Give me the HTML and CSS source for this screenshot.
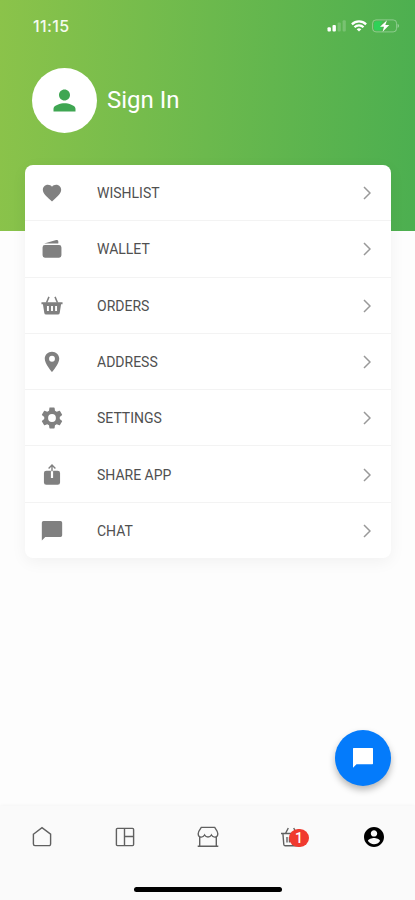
FILE: index.html
```html
<!DOCTYPE html>
<html lang="en">
<head>
    <meta charset="UTF-8">
    <meta name="viewport" content="width=device-width, initial-scale=1.0">
    <title>Account</title>
    <link rel="stylesheet" href="styles.css">
</head>
<body>
    <header class="header">
        <div class="status-bar">
            <span class="time">11:15</span>
            <div class="status-icons">
                <svg class="signal" width="20" height="12" viewBox="0 0 20 12" fill="#fff">
                    <rect x="0.5" y="7.3" width="3.4" height="4.3" rx="1"/>
                    <rect x="5.5" y="5" width="3.4" height="6.6" rx="1"/>
                    <rect x="10.6" y="2.6" width="3.2" height="9" rx="1" opacity="0.2"/>
                    <rect x="15.6" y="0.2" width="3.2" height="11.4" rx="1" opacity="0.2"/>
                </svg>
                <svg class="wifi" width="16" height="12" viewBox="0 0 16 12" fill="none" stroke="#fff" stroke-width="2.3">
                    <path d="M0.9 4.3a10.2 10.2 0 0 1 14.2 0"/>
                    <path d="M3.5 7.2a6.4 6.4 0 0 1 9 0"/>
                    <path d="M5.7 9.2a3.5 3.5 0 0 1 4.6 0L8 11.6z" fill="#fff" stroke="none"/>
                </svg>
                <svg class="battery" width="28" height="14" viewBox="0 0 28 14">
                    <rect x="0.6" y="0.9" width="24" height="12" rx="3.4" fill="none" stroke="#fff" stroke-opacity="0.35"/>
                    <path d="M4 2.3h6.6L7.8 7.6h2.4L9 11.5H4a2 2 0 0 1-2-2V4.3a2 2 0 0 1 2-2z" fill="#30d158"/>
                    <path d="M15 1.2L8 7.7h4l-1.4 5 6.7-6.6h-4z" fill="#fff"/>
                    <path d="M25.6 4.8c2 .8 2 3.4 0 4.2z" fill="#fff" opacity="0.4"/>
                </svg>
            </div>
        </div>
        <div class="profile">
            <div class="avatar">
                <svg width="33" height="33" viewBox="0 0 24 24" fill="#3fa652">
                    <path d="M12 12c2.21 0 4-1.79 4-4s-1.79-4-4-4-4 1.79-4 4 1.79 4 4 4zm0 2c-2.67 0-8 1.34-8 4v2h16v-2c0-2.66-5.33-4-8-4z"/>
                </svg>
            </div>
            <span class="sign-in">Sign In</span>
        </div>
    </header>

    <main class="content">
        <ul class="menu">
            <li class="menu-item">
                <svg class="icon" viewBox="0 0 24 24"><path d="M12 21.35l-1.45-1.32C5.4 15.36 2 12.28 2 8.5 2 5.42 4.42 3 7.5 3c1.74 0 3.41.81 4.5 2.09C13.09 3.81 14.76 3 16.5 3 19.58 3 22 5.42 22 8.5c0 3.78-3.4 6.86-8.55 11.54L12 21.35z"/></svg>
                <span class="label">WISHLIST</span>
                <svg class="chevron" viewBox="0 0 8 14"><path d="M1 1l6 6-6 6"/></svg>
            </li>
            <li class="menu-item">
                <svg class="icon" viewBox="0 0 24 24"><path d="M4.300 7.700h15.400A2.600 2.600 0 0 1 22.300 10.300v8.600a2.600 2.600 0 0 1-2.600 2.600H4.300A2.600 2.600 0 0 1 1.700 18.900V10.300A2.600 2.600 0 0 1 4.300 7.700zM3.400 6L16.600 2.300a1.800 1.800 0 0 1 2.300 1.800V6z"/></svg>
                <span class="label">WALLET</span>
                <svg class="chevron" viewBox="0 0 8 14"><path d="M1 1l6 6-6 6"/></svg>
            </li>
            <li class="menu-item">
                <svg class="icon" viewBox="0 0 24 24">
                    <path d="M8.700 2L6 8.500M15.300 2L18 8.500" fill="none" stroke="#808080" stroke-width="1.700"/>
                    <path fill-rule="evenodd" d="M0.500 7.800h23v2.400h-1.600l-1.500 9.400a2 2 0 0 1-2 1.800H5.600a2 2 0 0 1-2-1.800L2.100 10.200H0.500zM6.500 12v5.500h2.100v-5.500zM10.950 12v5.500h2.100v-5.500zM15.400 12v5.500H17.500v-5.500z"/>
                </svg>
                <span class="label">ORDERS</span>
                <svg class="chevron" viewBox="0 0 8 14"><path d="M1 1l6 6-6 6"/></svg>
            </li>
            <li class="menu-item">
                <svg class="icon" viewBox="0 0 24 24"><path fill-rule="evenodd" d="M12 0.900c-4.400 0-7.900 3.300-7.900 7.600 0 5.600 7.900 14.500 7.900 14.500s7.900-8.900 7.900-14.500c0-4.300-3.500-7.600-7.900-7.600zm0 10.800a3.200 3.200 0 1 1 0-6.400 3.200 3.200 0 0 1 0 6.400z"/></svg>
                <span class="label">ADDRESS</span>
                <svg class="chevron" viewBox="0 0 8 14"><path d="M1 1l6 6-6 6"/></svg>
            </li>
            <li class="menu-item">
                <svg class="icon icon-large" viewBox="0 0 24 24"><path d="M19.140 12.940c.04-.3.060-.61.060-.94 0-.32-.02-.64-.07-.94l2.030-1.580a.49.49 0 0 0 .12-.61l-1.920-3.320a.488.488 0 0 0-.59-.22l-2.390.96c-.5-.38-1.030-.7-1.620-.94l-.36-2.540a.484.484 0 0 0-.48-.41h-3.840c-.24 0-.43.17-.47.41l-.36 2.540c-.59.24-1.130.57-1.620.94l-2.390-.96a.488.488 0 0 0-.59.22L2.740 8.870a.49.49 0 0 0 .12.610l2.030 1.580c-.05.3-.09.630-.09.940s.02.640.07.940l-2.030 1.580a.49.49 0 0 0-.12.610l1.920 3.320c.12.220.37.290.59.220l2.390-.96c.5.380 1.030.7 1.620.94l.36 2.540c.05.240.24.410.48.410h3.840c.24 0 .44-.17.470-.41l.36-2.540c.59-.24 1.130-.56 1.620-.94l2.390.96c.22.080.47 0 .59-.22l1.920-3.320a.49.49 0 0 0-.12-.61l-2.010-1.580zM12 15.600A3.600 3.600 0 1 1 12 8.400a3.600 3.600 0 0 1 0 7.200z"/></svg>
                <span class="label">SETTINGS</span>
                <svg class="chevron" viewBox="0 0 8 14"><path d="M1 1l6 6-6 6"/></svg>
            </li>
            <li class="menu-item">
                <svg class="icon" viewBox="0 0 24 24">
                    <path d="M5.800 7.300h5v8h2.400v-8h5a2.600 2.600 0 0 1 2.600 2.600v10.200a2.600 2.600 0 0 1-2.600 2.600H5.800a2.600 2.600 0 0 1-2.600-2.600V9.900a2.600 2.600 0 0 1 2.600-2.600z"/>
                    <path d="M12 8V1.300M8.300 4.800L12 1.100 15.700 4.800" fill="none" stroke="#808080" stroke-width="1.500"/>
                </svg>
                <span class="label">SHARE APP</span>
                <svg class="chevron" viewBox="0 0 8 14"><path d="M1 1l6 6-6 6"/></svg>
            </li>
            <li class="menu-item">
                <svg class="icon" viewBox="0 0 24 24"><path d="M2.700 1.200h18.600A1.800 1.800 0 0 1 23.100 3v13.700a1.800 1.800 0 0 1-1.800 1.800H4.700L0.900 22.300V3A1.800 1.800 0 0 1 2.700 1.200z"/></svg>
                <span class="label">CHAT</span>
                <svg class="chevron" viewBox="0 0 8 14"><path d="M1 1l6 6-6 6"/></svg>
            </li>
        </ul>
    </main>

    <button class="chat-btn" aria-label="Chat">
        <svg width="22" height="22" viewBox="0 0 22 22" fill="#fff"><path d="M1.600 1h18.800a.6.6 0 0 1 .6.600v15a.6.6 0 0 1-.6.600H4.500L1 20.700V1.600a.6.6 0 0 1 .6-.6z"/></svg>
    </button>

    <nav class="tab-bar">
        <div class="tabs">
            <a class="tab">
                <svg width="22" height="22" viewBox="0 0 22 22"><path d="M2.400 8.200L11 1.600l8.600 6.600v9.900a1.500 1.500 0 0 1-1.500 1.500H3.900a1.500 1.500 0 0 1-1.500-1.500z"/></svg>
            </a>
            <a class="tab">
                <svg width="22" height="22" viewBox="0 0 22 22"><rect x="2.400" y="2.400" width="17.200" height="17.200" rx="1"/><path d="M10.500 2.400v17.200M10.500 10.500h9.100"/></svg>
            </a>
            <a class="tab">
                <svg width="22" height="22" viewBox="0 0 22 22"><path d="M4.300 1.400h13.400c1.300 1.800 3.100 3.900 3.100 6.400 0 2-1.200 3.300-3.100 3.300-1.500 0-2.600-.8-3.300-2.100-.7 1.200-2 2-3.400 2s-2.700-.8-3.400-2c-.7 1.300-1.800 2.100-3.300 2.100-1.900 0-3.100-1.300-3.100-3.300 0-2.500 1.800-4.600 3.100-6.400zM2.700 10.900v9.200M19.300 10.900v9.200M0.700 20.200h20.600"/></svg>
            </a>
            <a class="tab">
                <svg width="22" height="22" viewBox="0 0 22 22"><path d="M1 7.500h20M2.900 7.500l.9 11a1.500 1.500 0 0 0 1.500 1.300h11.400a1.500 1.500 0 0 0 1.500-1.300l.9-11M5.600 7.200L8.300 2M16.400 7.200L13.700 2M7 11v5.500M9.500 11v5.500"/></svg>
                <span class="badge">1</span>
            </a>
            <a class="tab">
                <svg class="tab-active" width="24" height="24" viewBox="0 0 24 24"><path d="M12 2C6.480 2 2 6.480 2 12s4.480 10 10 10 10-4.480 10-10S17.520 2 12 2zm0 3.200c1.800 0 3.200 1.400 3.200 3.200s-1.400 3.200-3.200 3.200-3.200-1.400-3.200-3.200 1.400-3.200 3.200-3.200zm0 14c-2.500 0-4.710-1.280-6-3.220.03-1.990 4-3.080 6-3.080s5.970 1.090 6 3.080a7.200 7.200 0 0 1-6 3.220z"/></svg>
            </a>
        </div>
        <div class="home-indicator"></div>
    </nav>
</body>
</html>
```
FILE: styles.css
```css
* {
    box-sizing: border-box;
}
body {
    font-family: Roboto, 'Liberation Sans', sans-serif;
    background-color: #fdfdfd;
    display: flex;
    flex-direction: column;
    position: relative;
    height: 100vh;
    margin: 0;
    overflow: hidden;
}
svg {
    display: block;
    flex-shrink: 0;
}
.header {
    height: 231px;
    flex-shrink: 0;
    background: linear-gradient(92deg, #8bc34a, #4caf50);
    color: #fff;
}
.status-bar {
    display: flex;
    justify-content: space-between;
    align-items: center;
    height: 51px;
    padding: 0 15px 0 33px;
}
.time {
    font-family: Inter, Roboto, sans-serif;
    font-size: 16px;
    font-weight: 500;
    letter-spacing: 0.4px;
    color: #f4faee;
}
.status-icons {
    display: flex;
    align-items: center;
}
.wifi {
    margin: 0 5px 0 4px;
}
.profile {
    display: flex;
    align-items: center;
    gap: 10px;
    padding: 17px 32px 0;
}
.avatar {
    display: flex;
    justify-content: center;
    align-items: center;
    width: 65px;
    height: 65px;
    border-radius: 50%;
    background-color: #fff;
}
.sign-in {
    font-size: 24px;
    padding-bottom: 2px;
}
.content {
    flex: 1;
    padding: 0 24px 0 25px;
}
.menu {
    list-style: none;
    margin: -66px 0 0;
    padding: 0;
    height: 393px;
    display: flex;
    flex-direction: column;
    background-color: #fff;
    border-radius: 8px;
    box-shadow: 0 4px 16px rgba(0, 0, 0, 0.05);
}
.menu-item {
    flex: 1;
    display: flex;
    align-items: center;
    padding: 1px 20px 0 17px;
}
.menu-item + .menu-item {
    border-top: 1px solid #f3f3f3;
}
.icon {
    width: 22px;
    height: 22px;
    margin-left: -1px;
    fill: #808080;
}
.icon-large {
    width: 26px;
    height: 26px;
    margin: 0 -2px 0 -3px;
}
.label {
    flex: 1;
    margin-left: 34px;
    font-size: 14px;
    color: #505050;
}
.chevron {
    width: 8px;
    height: 14px;
    fill: none;
    stroke: #999;
    stroke-width: 1.5;
}
.chat-btn {
    position: absolute;
    right: 24px;
    bottom: 114px;
    display: flex;
    justify-content: center;
    align-items: center;
    width: 56px;
    height: 56px;
    padding: 0;
    border: none;
    border-radius: 50%;
    background-color: #047bfb;
    box-shadow: 0 4px 7px rgba(0, 0, 0, 0.28);
}
.tab-bar {
    height: 94px;
    display: flex;
    flex-direction: column;
    align-items: center;
    justify-content: space-between;
    padding-bottom: 8px;
    background-color: #fafafa;
    box-shadow: 0 -1px 3px rgba(0, 0, 0, 0.03);
}
.tabs {
    display: flex;
    width: 100%;
    height: 62px;
}
.tab {
    flex: 1;
    display: flex;
    justify-content: center;
    align-items: center;
    position: relative;
}
.tab svg {
    fill: none;
    stroke: #606060;
    stroke-width: 1.4;
}
.tab .tab-active {
    fill: #000;
    stroke: none;
}
.badge {
    position: absolute;
    left: 40px;
    top: 23px;
    width: 20px;
    height: 18px;
    border-radius: 9px;
    background-color: #f03a2f;
    color: #fff;
    font-size: 14px;
    font-weight: 500;
    line-height: 18px;
    text-align: center;
}
.home-indicator {
    width: 148px;
    height: 5px;
    border-radius: 3px;
    background-color: #000;
}
```
